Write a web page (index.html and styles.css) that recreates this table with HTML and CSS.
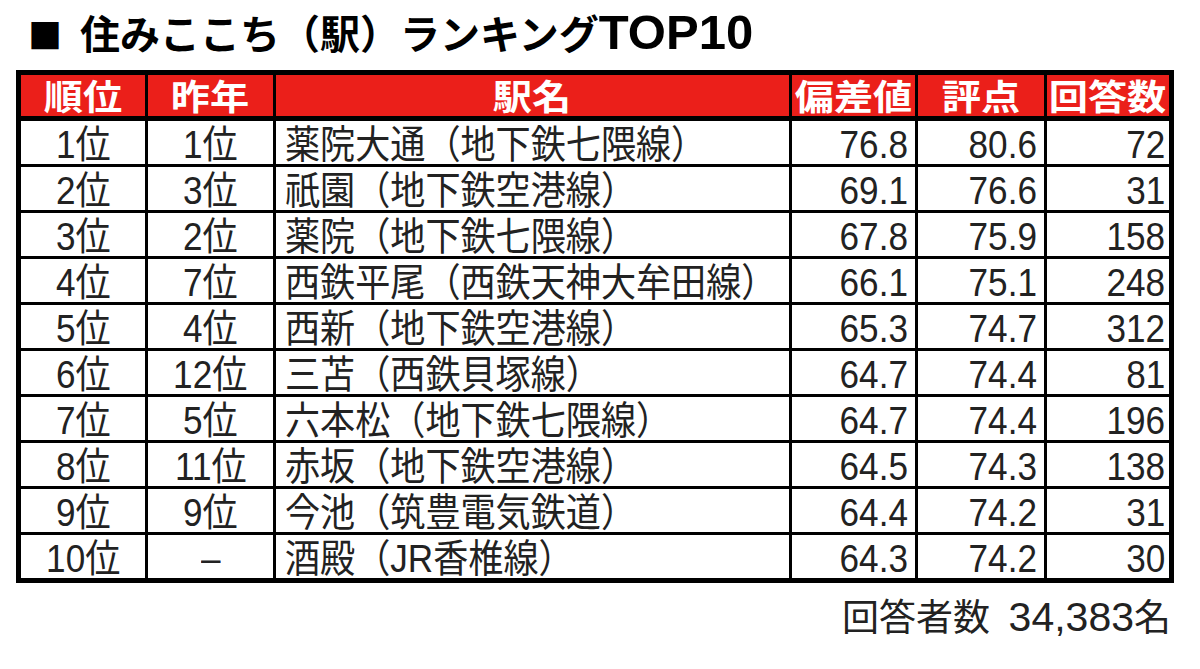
FILE: index.html
```html
<!DOCTYPE html>
<html lang="ja">
<head>
<meta charset="utf-8">
<title>住みここち（駅）ランキングTOP10</title>
<link rel="stylesheet" href="styles.css">
</head>
<body>
<div class="page">
  <h1 class="title"><span class="sq">■</span>住みここち（駅）ランキング<span class="latin">TOP10</span></h1>
  <div class="grid">
    <div class="h"><span>順位</span></div>
    <div class="h"><span>昨年</span></div>
    <div class="h"><span>駅名</span></div>
    <div class="h"><span>偏差値</span></div>
    <div class="h"><span>評点</span></div>
    <div class="h"><span>回答数</span></div>

    <div class="c ctr"><span>1位</span></div><div class="c ctr"><span>1位</span></div><div class="c lft"><span>薬院大通（地下鉄七隈線）</span></div><div class="c rgt"><span>76.8</span></div><div class="c rgt"><span>80.6</span></div><div class="c rgt last"><span>72</span></div>
    <div class="c ctr"><span>2位</span></div><div class="c ctr"><span>3位</span></div><div class="c lft"><span>祇園（地下鉄空港線）</span></div><div class="c rgt"><span>69.1</span></div><div class="c rgt"><span>76.6</span></div><div class="c rgt last"><span>31</span></div>
    <div class="c ctr"><span>3位</span></div><div class="c ctr"><span>2位</span></div><div class="c lft"><span>薬院（地下鉄七隈線）</span></div><div class="c rgt"><span>67.8</span></div><div class="c rgt"><span>75.9</span></div><div class="c rgt last"><span>158</span></div>
    <div class="c ctr"><span>4位</span></div><div class="c ctr"><span>7位</span></div><div class="c lft"><span>西鉄平尾（西鉄天神大牟田線）</span></div><div class="c rgt"><span>66.1</span></div><div class="c rgt"><span>75.1</span></div><div class="c rgt last"><span>248</span></div>
    <div class="c ctr"><span>5位</span></div><div class="c ctr"><span>4位</span></div><div class="c lft"><span>西新（地下鉄空港線）</span></div><div class="c rgt"><span>65.3</span></div><div class="c rgt"><span>74.7</span></div><div class="c rgt last"><span>312</span></div>
    <div class="c ctr"><span>6位</span></div><div class="c ctr"><span>12位</span></div><div class="c lft"><span>三苫（西鉄貝塚線）</span></div><div class="c rgt"><span>64.7</span></div><div class="c rgt"><span>74.4</span></div><div class="c rgt last"><span>81</span></div>
    <div class="c ctr"><span>7位</span></div><div class="c ctr"><span>5位</span></div><div class="c lft"><span>六本松（地下鉄七隈線）</span></div><div class="c rgt"><span>64.7</span></div><div class="c rgt"><span>74.4</span></div><div class="c rgt last"><span>196</span></div>
    <div class="c ctr"><span>8位</span></div><div class="c ctr"><span>11位</span></div><div class="c lft"><span>赤坂（地下鉄空港線）</span></div><div class="c rgt"><span>64.5</span></div><div class="c rgt"><span>74.3</span></div><div class="c rgt last"><span>138</span></div>
    <div class="c ctr"><span>9位</span></div><div class="c ctr"><span>9位</span></div><div class="c lft"><span>今池（筑豊電気鉄道）</span></div><div class="c rgt"><span>64.4</span></div><div class="c rgt"><span>74.2</span></div><div class="c rgt last"><span>31</span></div>
    <div class="c ctr"><span>10位</span></div><div class="c ctr"><span>–</span></div><div class="c lft"><span>酒殿（JR香椎線）</span></div><div class="c rgt"><span>64.3</span></div><div class="c rgt"><span>74.2</span></div><div class="c rgt last"><span>30</span></div>
  </div>
  <p class="note">回答者数&ensp;<span class="num">34,383</span>名</p>
</div>
</body>
</html>
```

FILE: styles.css
```css
html, body {
  margin: 0;
  padding: 0;
  background: #ffffff;
}

.page {
  padding: 0 26px 0 16px;
  font-family: "Liberation Sans", "Noto Sans CJK JP", sans-serif;
  color: #222222;
}

.title {
  margin: 0;
  height: 70px;
  padding-left: 12px;
  font-size: 40px;
  line-height: 70px;
  font-weight: bold;
  color: #000000;
  white-space: nowrap;
}

.title .sq {
  font-family: "Noto Sans CJK JP", sans-serif;
  font-size: 34px;
  line-height: 1;
  margin-right: 18px;
}

.title .latin {
  font-size: 49px;
  line-height: 1;
}

.grid {
  display: grid;
  grid-template-columns: 124px 125px 513px 123px 126px 122px;
  grid-template-rows: 43px;
  grid-auto-rows: 43px;
  column-gap: 3px;
  row-gap: 3px;
  padding: 5px;
  width: 1158px;
  box-sizing: border-box;
  background: #000000;
}

.h {
  background: #eb1f1a;
  color: #ffffff;
  font-weight: bold;
  font-size: 35px;
  line-height: 35px;
  padding-top: 5px;
  margin-bottom: 2px;
  box-sizing: border-box;
  text-align: center;
  white-space: nowrap;
}

.h span {
  display: inline-block;
  transform: scaleX(1.12);
}

.c {
  background: #ffffff;
  font-size: 39px;
  line-height: 37px;
  padding-top: 5px;
  box-sizing: border-box;
  white-space: nowrap;
}

.c span {
  display: inline-block;
  transform: scaleX(0.9);
}

.ctr {
  text-align: center;
}

.ctr span {
  transform-origin: center center;
}

.lft {
  text-align: left;
  padding-left: 9px;
}

.lft span {
  transform-origin: left center;
}

.rgt {
  text-align: right;
  padding-right: 7px;
}

.rgt.last {
  padding-right: 4px;
}

.rgt span {
  transform-origin: right center;
}

.note {
  margin: 14px 0 0 0;
  padding-right: 3px;
  text-align: right;
  font-size: 37px;
  line-height: 40px;
}

.note .num {
  font-size: 41px;
}
```
